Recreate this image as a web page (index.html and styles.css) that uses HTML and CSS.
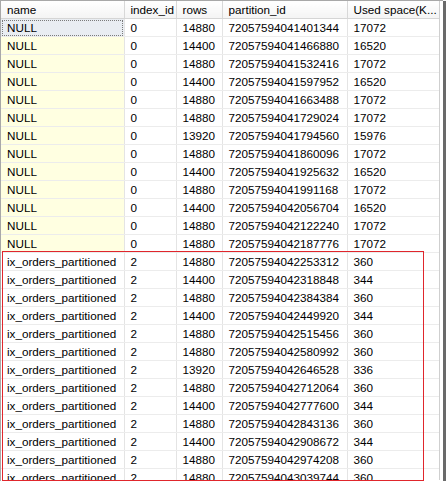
FILE: index.html
```html
<!DOCTYPE html>
<html>
<head>
<meta charset="utf-8">
<link rel="stylesheet" href="styles.css">
</head>
<body>
<div class="frame">
  <div class="grid">
    <table class="results">
      <colgroup>
        <col class="c-name"><col class="c-idx"><col class="c-rows"><col class="c-part"><col class="c-used">
      </colgroup>
      <thead>
        <tr><th>name</th><th>index_id</th><th>rows</th><th>partition_id</th><th>Used space(K...</th></tr>
      </thead>
      <tbody>
        <tr><td class="null sel">NULL</td><td>0</td><td>14880</td><td>72057594041401344</td><td>17072</td></tr>
        <tr><td class="null">NULL</td><td>0</td><td>14400</td><td>72057594041466880</td><td>16520</td></tr>
        <tr><td class="null">NULL</td><td>0</td><td>14880</td><td>72057594041532416</td><td>17072</td></tr>
        <tr><td class="null">NULL</td><td>0</td><td>14400</td><td>72057594041597952</td><td>16520</td></tr>
        <tr><td class="null">NULL</td><td>0</td><td>14880</td><td>72057594041663488</td><td>17072</td></tr>
        <tr><td class="null">NULL</td><td>0</td><td>14880</td><td>72057594041729024</td><td>17072</td></tr>
        <tr><td class="null">NULL</td><td>0</td><td>13920</td><td>72057594041794560</td><td>15976</td></tr>
        <tr><td class="null">NULL</td><td>0</td><td>14880</td><td>72057594041860096</td><td>17072</td></tr>
        <tr><td class="null">NULL</td><td>0</td><td>14400</td><td>72057594041925632</td><td>16520</td></tr>
        <tr><td class="null">NULL</td><td>0</td><td>14880</td><td>72057594041991168</td><td>17072</td></tr>
        <tr><td class="null">NULL</td><td>0</td><td>14400</td><td>72057594042056704</td><td>16520</td></tr>
        <tr><td class="null">NULL</td><td>0</td><td>14880</td><td>72057594042122240</td><td>17072</td></tr>
        <tr><td class="null">NULL</td><td>0</td><td>14880</td><td>72057594042187776</td><td>17072</td></tr>
        <tr><td>ix_orders_partitioned</td><td>2</td><td>14880</td><td>72057594042253312</td><td>360</td></tr>
        <tr><td>ix_orders_partitioned</td><td>2</td><td>14400</td><td>72057594042318848</td><td>344</td></tr>
        <tr><td>ix_orders_partitioned</td><td>2</td><td>14880</td><td>72057594042384384</td><td>360</td></tr>
        <tr><td>ix_orders_partitioned</td><td>2</td><td>14400</td><td>72057594042449920</td><td>344</td></tr>
        <tr><td>ix_orders_partitioned</td><td>2</td><td>14880</td><td>72057594042515456</td><td>360</td></tr>
        <tr><td>ix_orders_partitioned</td><td>2</td><td>14880</td><td>72057594042580992</td><td>360</td></tr>
        <tr><td>ix_orders_partitioned</td><td>2</td><td>13920</td><td>72057594042646528</td><td>336</td></tr>
        <tr><td>ix_orders_partitioned</td><td>2</td><td>14880</td><td>72057594042712064</td><td>360</td></tr>
        <tr><td>ix_orders_partitioned</td><td>2</td><td>14400</td><td>72057594042777600</td><td>344</td></tr>
        <tr><td>ix_orders_partitioned</td><td>2</td><td>14880</td><td>72057594042843136</td><td>360</td></tr>
        <tr><td>ix_orders_partitioned</td><td>2</td><td>14400</td><td>72057594042908672</td><td>344</td></tr>
        <tr><td>ix_orders_partitioned</td><td>2</td><td>14880</td><td>72057594042974208</td><td>360</td></tr>
        <tr><td>ix_orders_partitioned</td><td>2</td><td>14880</td><td>72057594043039744</td><td>360</td></tr>
      </tbody>
    </table>
  </div>
  <div class="highlight"></div>
</div>
</body>
</html>
```
FILE: styles.css
```css
html, body {
  margin: 0;
  padding: 0;
  background: #ffffff;
}
.frame {
  position: relative;
  width: 442px;
  height: 480px;
  border-top: 1px solid #a8a8a8;
  border-left: 1px solid #a8a8a8;
  box-shadow: 2px 2px 0 1px #6a6a6a, 3px 3px 2px 1px #b0b0b0;
  overflow: hidden;
  background: #ffffff;
}
.grid {
  width: 438px;
  height: 479px;
  overflow: hidden;
  border-right: 1px solid #cfcfcf;
}
.results {
  border-collapse: collapse;
  table-layout: fixed;
  width: 438px;
  font-family: "Liberation Sans", Arial, sans-serif;
  font-size: 11.7px;
  color: #000000;
}
.c-name { width: 123px; }
.c-idx { width: 52px; }
.c-rows { width: 46px; }
.c-part { width: 125px; }
.c-used { width: 92px; }
th, td {
  height: 17px;
  padding: 0 0 0 6px;
  text-align: left;
  white-space: nowrap;
  overflow: hidden;
  border-right: 1px solid #e4e4e4;
  border-bottom: 1px solid #ececec;
  line-height: 17px;
  box-sizing: content-box;
}
th {
  font-weight: normal;
  background: linear-gradient(#ffffff, #f4f4f4);
  border-right: 1px solid #d8d8d8;
  border-bottom: 1px solid #d5d5d5;
}
td.null {
  background: #ffffe1;
}
td.sel {
  background: #e9edf2;
  outline: 1px dotted #7a7a7a;
  outline-offset: -2px;
}
.highlight {
  position: absolute;
  left: 1px;
  top: 250px;
  width: 420px;
  height: 228px;
  border: 1px solid #e0262c;
  pointer-events: none;
}
```
